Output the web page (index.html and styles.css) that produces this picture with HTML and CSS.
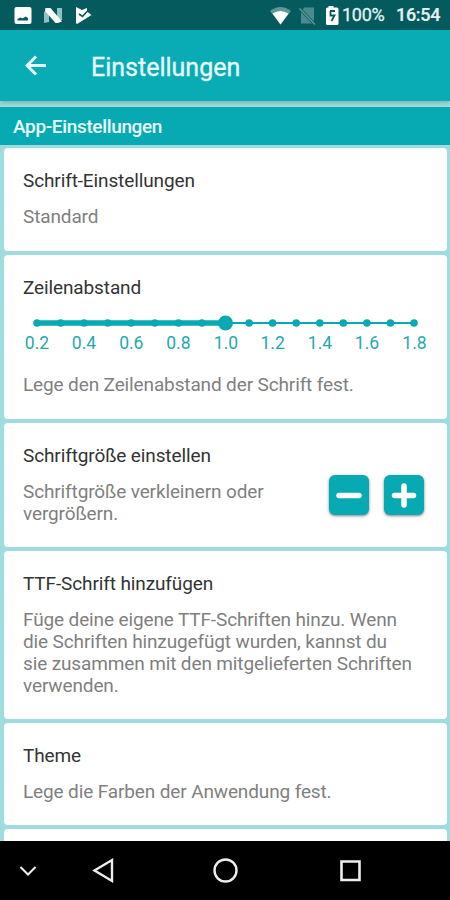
FILE: index.html
```html
<!DOCTYPE html>
<html lang="de">
<head>
    <meta charset="UTF-8">
    <meta name="viewport" content="width=device-width, initial-scale=1.0">
    <title>Einstellungen</title>
    <link rel="stylesheet" href="styles.css">
</head>
<body>
    <!-- Status bar -->
    <div class="status-bar">
        <svg class="status-icons" width="96" height="30" viewBox="0 0 96 30">
            <rect x="14.5" y="7" width="17" height="17" rx="2" fill="#fff"/>
            <path d="M17.500 20.500v-1.500l3-1.500 2 1 3-2 2.500 1.500v2.500z" fill="#055a5d"/>
            <path d="M44 12l5-3v13l-5 1z" fill="#8fc0c2"/>
            <path d="M57 8h5v12l-5 2z" fill="#8fc0c2"/>
            <path d="M45.500 8h5L62 21.500 58 23h-2.500L45 11z" fill="#fff"/>
            <path d="M76 7l6 3 5-2 0 3.500 4.500 3.500L77 24l-1-1z" fill="#fff"/>
            <path d="M79 14l3.500 2.500L88.500 10" fill="none" stroke="#055a5d" stroke-width="1.600"/>
        </svg>
        <div class="status-right">
            <svg width="72" height="30" viewBox="0 0 72 30">
                <path d="M0 11Q10.500 3 21 11L10.500 24.500z" fill="#5d9799"/>
                <path d="M2.500 13.500Q10.500 8.500 18.500 13.500L10.500 24.500z" fill="#fff"/>
                <path d="M34 7.500h10v16H31V13z" fill="#4b8b8d"/>
                <path d="M29.500 8.500L45 24.500" stroke="#055a5d" stroke-width="3"/>
                <path d="M29.500 8.500L45 24.500" stroke="#5d9799" stroke-width="1.500"/>
                <path d="M58.500 7.500V6h5v1.500H67q1.500 0 1.500 1.500v14.500q0 1.500-1.500 1.500H57.500q-1.500 0-1.500-1.500V9q0-1.500 1.500-1.500z" fill="#fff"/>
                <path d="M60 11h5M60.500 11v4.500h4L61.500 21" fill="none" stroke="#055a5d" stroke-width="1.800"/>
            </svg>
            <span class="battery">100%</span>
            <span class="clock">16:54</span>
        </div>
    </div>

    <!-- App bar -->
    <div class="app-bar">
        <svg width="22" height="22" viewBox="0 0 22 22" fill="none" stroke="#e9fbfc" stroke-width="3">
            <path d="M21 10.500H3M11 1.500L2.200 10.500l8.800 9"/>
        </svg>
        <h1>Einstellungen</h1>
    </div>

    <div class="section-title">App-Einstellungen</div>

    <!-- Settings -->
    <div class="settings">
        <div class="card card-tall">
            <h2>Schrift-Einstellungen</h2>
            <p>Standard</p>
        </div>

        <div class="card card-tall">
            <h2>Zeilenabstand</h2>
            <svg class="slider" width="405" height="61" viewBox="0 0 405 61">
                <path d="M14 24H391" stroke="#07aab3" stroke-width="2"/>
                <path d="M14 24H202.500" stroke="#07aab3" stroke-width="5.500"/>
                <path class="ticks" d="M14 24h0M37.600 24h0M61.100 24h0M84.700 24h0M108.300 24h0M131.800 24h0M155.400 24h0M178.900 24h0M226.100 24h0M249.600 24h0M273.200 24h0M296.800 24h0M320.300 24h0M343.900 24h0M367.400 24h0M391 24h0"/>
                <circle cx="202.500" cy="24" r="7.500" fill="#07aab3"/>
                <g class="slider-labels">
                    <text x="14" y="50">0.2</text>
                    <text x="61" y="50">0.4</text>
                    <text x="108.300" y="50">0.6</text>
                    <text x="155.400" y="50">0.8</text>
                    <text x="203" y="50">1.0</text>
                    <text x="249.600" y="50">1.2</text>
                    <text x="297" y="50">1.4</text>
                    <text x="344" y="50">1.6</text>
                    <text x="391.500" y="50">1.8</text>
                </g>
            </svg>
            <p>Lege den Zeilenabstand der Schrift fest.</p>
        </div>

        <div class="card card-row">
            <div>
                <h2>Schriftgröße einstellen</h2>
                <p>Schriftgröße verkleinern oder<br>vergrößern.</p>
            </div>
            <div class="buttons">
                <button aria-label="Verkleinern">
                    <svg width="40" height="40" viewBox="0 0 40 40"><path d="M10 20.500h20"/></svg>
                </button>
                <button aria-label="Vergrößern">
                    <svg width="40" height="40" viewBox="0 0 40 40"><path d="M10.500 20.500h19M20 11v19"/></svg>
                </button>
            </div>
        </div>

        <div class="card">
            <h2>TTF-Schrift hinzufügen</h2>
            <p>Füge deine eigene TTF-Schriften hinzu. Wenn<br>die Schriften hinzugefügt wurden, kannst du<br>sie zusammen mit den mitgelieferten Schriften<br>verwenden.</p>
        </div>

        <div class="card">
            <h2>Theme</h2>
            <p>Lege die Farben der Anwendung fest.</p>
        </div>

        <div class="card"></div>
    </div>

    <!-- Navigation bar -->
    <div class="nav-bar">
        <svg width="450" height="59" viewBox="0 0 450 59" fill="none" stroke="#eee" stroke-width="2">
            <path d="M20.500 26l7.500 7.500 7.500-7.500"/>
            <path d="M112 19v21L94.500 29.500z" stroke-width="2.400"/>
            <circle cx="225.500" cy="29.500" r="11" stroke-width="2.400"/>
            <path d="M341.500 20.500h18v18.500h-18z" stroke-width="2.600"/>
        </svg>
    </div>
</body>
</html>
```

FILE: styles.css
```css
body {
    font-family: Roboto, "Liberation Sans", sans-serif;
    margin: 0;
    height: 900px;
    display: flex;
    flex-direction: column;
    overflow: hidden;
    background-color: #a0dcde;
}
h1, h2, p {
    margin: 0;
    font-weight: 400;
    white-space: nowrap;
}
svg {
    display: block;
}
.status-bar {
    height: 30px;
    flex: none;
    display: flex;
    justify-content: space-between;
    background-color: #055a5d;
    color: #e6f2f2;
}
.status-right {
    display: flex;
    align-items: center;
    width: 180px;
    font-size: 18px;
    line-height: 32px;
}
.battery {
    width: 54px;
    letter-spacing: -0.3px;
    -webkit-text-stroke: 0.3px;
}
.clock {
    font-weight: 500;
    letter-spacing: -0.3px;
    -webkit-text-stroke: 0.2px;
}
.app-bar {
    height: 71px;
    flex: none;
    display: flex;
    align-items: center;
    gap: 44px;
    padding-left: 25px;
    background-color: #09abb5;
    box-shadow: 0 2px 4px rgba(90, 120, 120, 0.4);
}
.app-bar h1 {
    padding-top: 3px;
    font-size: 25px;
    color: #e9fbfc;
    -webkit-text-stroke: 0.3px;
}
.section-title {
    height: 38px;
    flex: none;
    margin-top: 6px;
    padding-left: 13px;
    background-color: #07aab3;
    color: #e9fbfc;
    font-size: 19px;
    font-weight: 500;
    line-height: 39px;
    letter-spacing: -0.35px;
}
.settings {
    flex: 1;
    min-height: 0;
    overflow: hidden;
    display: flex;
    flex-direction: column;
    gap: 4px;
    padding: 3px 3px 0 4px;
}
.card {
    flex: none;
    min-height: 22px;
    padding: 22px 19px;
    background-color: #fff;
    border-radius: 4px;
}
.card-tall {
    padding-bottom: 23px;
}
.card h2 {
    font-size: 19px;
    line-height: 22px;
    letter-spacing: -0.12px;
    color: #333;
}
.card p {
    margin-top: 14px;
    font-size: 19px;
    line-height: 22px;
    letter-spacing: -0.13px;
    color: #7f7f7f;
}
.card-row {
    display: flex;
    justify-content: space-between;
}
.slider .ticks {
    stroke: #07aab3;
    stroke-width: 7.500px;
    stroke-linecap: round;
}
.slider-labels {
    fill: #1fa8b0;
    font-size: 17.500px;
    text-anchor: middle;
}
.buttons {
    display: flex;
    gap: 15px;
    padding: 30px 4px 0 0;
}
.buttons button {
    width: 40px;
    height: 40px;
    padding: 0;
    border: none;
    border-radius: 6px;
    background-color: #07aab3;
    box-shadow: 0 1px 3px rgba(0, 0, 0, 0.5);
}
.buttons path {
    fill: none;
    stroke: #fff;
    stroke-width: 5.500px;
    stroke-linecap: round;
}
.nav-bar {
    flex: none;
    height: 59px;
    background-color: #000;
}
```
